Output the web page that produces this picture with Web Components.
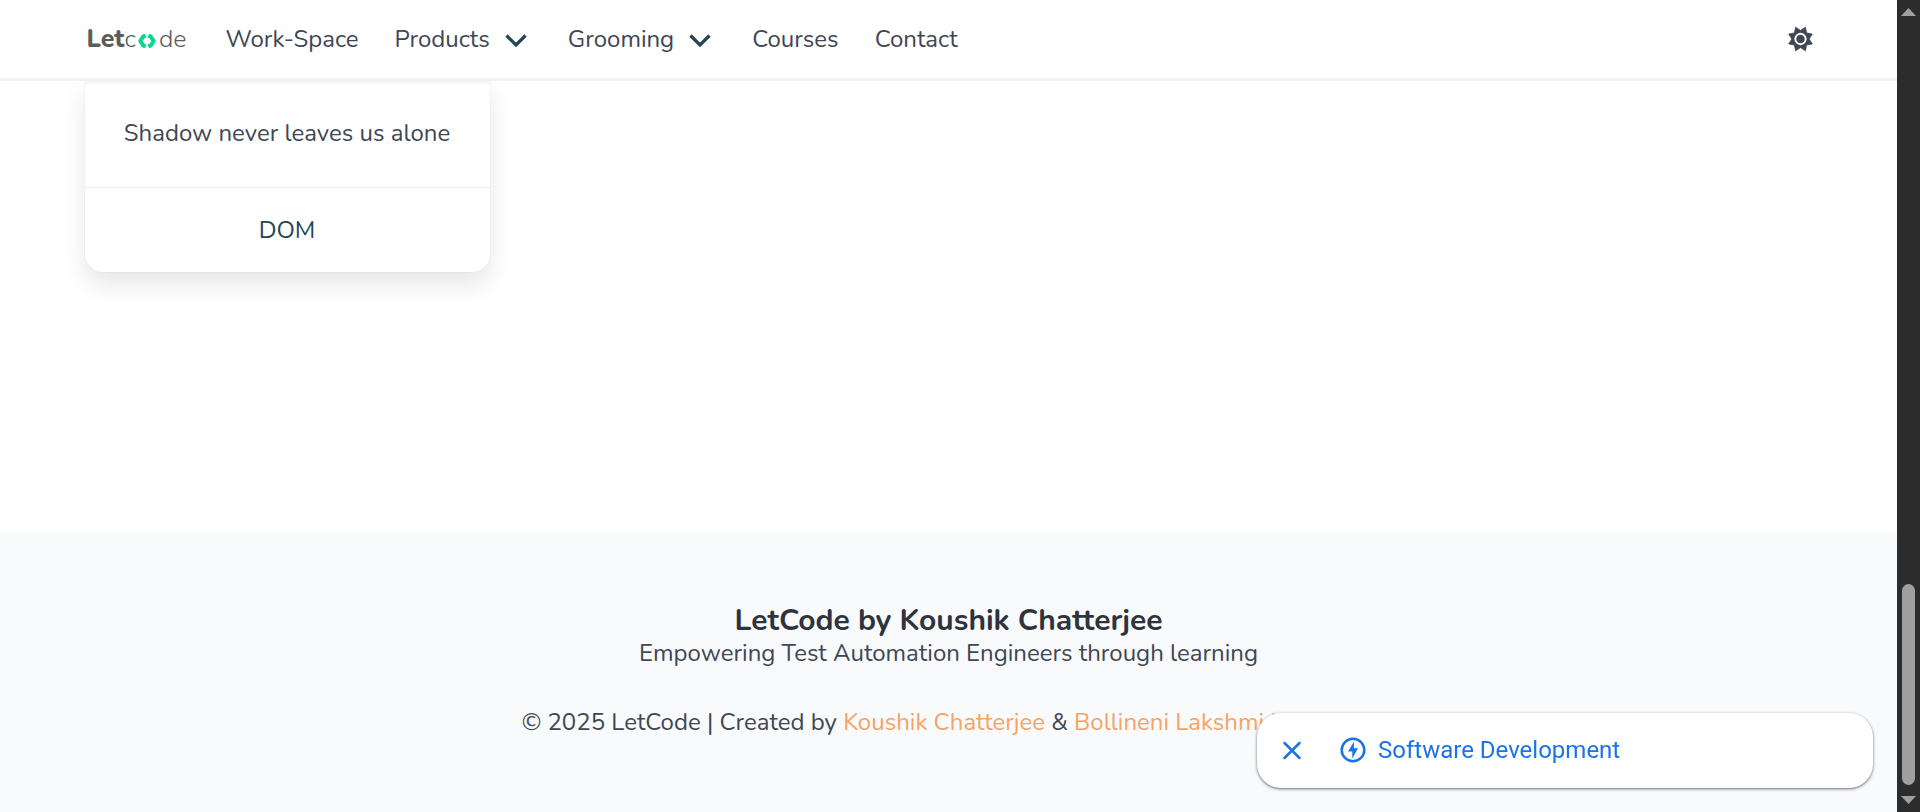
<!DOCTYPE html>
<html lang="en">
<head>
<meta charset="utf-8">
<title>LetCode</title>
<style>
  html, body { height: 100%; margin: 0; }
  body { background: #fff; color: #404654; font: 24px/36px Nunito, Lato, sans-serif; }
</style>
</head>
<body>
<lc-app></lc-app>

<script>
const define = (name, html) => customElements.define(name, class extends HTMLElement {
  constructor() {
    super();
    const template = document.createElement('template');
    template.innerHTML = html;
    this.attachShadow({ mode: 'open' }).append(template.content.cloneNode(true));
  }
});

define('lc-logo', `
  <style>
    :host { display: block; }
    a { display: flex; align-items: center; color: #5c5c5c; text-decoration: none; font-size: 25px; line-height: 36px; font-weight: 300; }
    b { font-weight: 800; }
    svg { display: block; margin: 3px 3px 0 2px; }
  </style>
  <a href="#home" aria-label="Letcode home"><b>Let</b><span>c</span><svg width="18" height="14" viewBox="0 0 18 14" fill="none" stroke="#06d98a" stroke-width="4" stroke-linejoin="round"><path d="M7.600 1.400 5.200 2.600 2.300 7l2.900 4.400 2.400 1.200M10.400 1.400l2.400 1.200L15.700 7l-2.900 4.400-2.400 1.200"/></svg><span>de</span></a>
`);

define('lc-nav-link', `
  <style>
    :host { display: block; }
    a { display: block; padding: 0 18px; color: inherit; text-decoration: none; }
  </style>
  <a href="#page"><slot></slot></a>
`);

define('lc-nav-menu', `
  <style>
    :host { display: block; }
    button { display: flex; align-items: center; gap: 15px; padding: 0 23px 0 18px; border: 0; background: none; color: inherit; font: inherit; }
    svg { display: block; margin-top: 4px; }
  </style>
  <button type="button" aria-haspopup="true"><slot></slot><svg width="22" height="14" viewBox="0 0 22 14" fill="none" stroke="#254655" stroke-width="3.200"><path d="M1.500 1.500 11 11l9.500-9.500"/></svg></button>
`);

define('lc-navbar', `
  <style>
    :host { display: block; background: #fff; border-bottom: 3px solid #f2f2f2; }
    .inner { display: flex; align-items: center; max-width: 1728px; height: 78px; margin: 0 auto; }
    lc-logo { padding-left: 2px; width: 121px; }
    nav { display: flex; flex: 1; }
    .theme { padding: 0; border: 0; background: none; }
    .theme svg { display: block; }
  </style>
  <div class="inner">
    <lc-logo></lc-logo>
    <nav aria-label="Main">
      <lc-nav-link>Work-Space</lc-nav-link>
      <lc-nav-menu>Products</lc-nav-menu>
      <lc-nav-menu>Grooming</lc-nav-menu>
      <lc-nav-link>Courses</lc-nav-link>
      <lc-nav-link>Contact</lc-nav-link>
    </nav>
    <button class="theme" type="button" aria-label="Switch theme">
      <svg width="25" height="26" viewBox="-12.500 -13 25 26"><path fill="#404654" stroke="#404654" stroke-width=".8" stroke-linejoin="round" d="M-4.900-11.800 0-8.600l4.900-3.200L6.100-6.100l5.700 1.200L8.600 0l3.200 4.900L6.100 6.100l-1.200 5.700L0 8.600l-4.900 3.200L-6.100 6.100l-5.700-1.200L-8.600 0l-3.200-4.900L-6.100-6.100Z"/><circle r="5.200" fill="#404654" stroke="#fff" stroke-width="1.900"/></svg>
    </button>
  </div>
`);

define('lc-card', `
  <style>
    :host { display: block; border-radius: 0 0 18px 18px; background: #fff; text-align: center;
      box-shadow: 0 12px 24px rgba(10,10,10,.1), 0 0 0 1px rgba(10,10,10,.02); }
    .body { padding: 34px 36px 36px; box-shadow: inset 0 4px 4px -2px rgba(10,10,10,.05); }
    footer { padding: 24px 18px; border-top: 1px solid #ededed; }
    a { color: #254655; text-decoration: none; }
  </style>
  <div class="body"><slot></slot></div>
  <footer><a href="#dom"><slot name="link"></slot></a></footer>
`);

define('lc-footer', `
  <style>
    :host { display: block; padding: 72px 36px 75px; background: #f9fafc; text-align: center; }
    h2 { margin: 0; color: #2e333d; font-size: 30px; line-height: 34px; font-weight: 700; }
    p { margin: 0 0 39px; line-height: 30px; }
    p:last-child { margin: 0; }
    a { color: #f7a364; text-decoration: none; }
  </style>
  <h2>LetCode by Koushik Chatterjee</h2>
  <p>Empowering Test Automation Engineers through learning</p>
  <p>© 2025 LetCode | Created by <a href="#koushik">Koushik Chatterjee</a> &amp; <a href="#bollineni">Bollineni Lakshmi Harshitha</a></p>
`);

define('lc-suggestion', `
  <style>
    :host { display: flex; align-items: center; box-sizing: border-box; width: 616px; height: 75px; padding: 0 23px 2px; border-radius: 24px; background: #fff;
      box-shadow: 0 1px 3px 1px rgba(0,0,0,.2), 0 1px 2px rgba(0,0,0,.35); color: #1a73e8; font-family: Roboto, sans-serif; }
    button { padding: 0; border: 0; background: none; }
    svg { display: block; }
    a { display: flex; align-items: center; gap: 12px; margin-left: 36px; color: inherit; text-decoration: none; }
  </style>
  <button type="button" aria-label="Close"><svg width="24" height="24" viewBox="0 0 24 24" fill="none" stroke="#1a73e8" stroke-width="2.500" stroke-linecap="round"><path d="m4.500 5 15 15m0-15-15 15"/></svg></button>
  <a href="#software"><svg width="26" height="26" viewBox="0 0 26 26"><circle cx="13" cy="13" r="11.300" fill="none" stroke="#1a73e8" stroke-width="2.500"/><path fill="#1a73e8" d="M13.900 4.800 8 14.500h4.300v6.900L18 11.300h-4.100Z"/></svg><slot></slot></a>
`);

define('lc-scrollbar', `
  <style>
    :host { display: flex; flex-direction: column; align-items: center; box-sizing: border-box; padding: 8px 0; background: #2c2c2c; }
    svg { display: block; fill: #9f9f9f; }
    .track { display: flex; flex: 1; align-items: flex-end; padding: 11px 0; }
    .thumb { width: 13px; height: 26.5%; border-radius: 7px; background: #9f9f9f; }
  </style>
  <svg width="15" height="8" viewBox="0 0 15 8"><path d="M7.500 0 15 8H0Z"/></svg>
  <div class="track"><div class="thumb"></div></div>
  <svg width="15" height="8" viewBox="0 0 15 8"><path d="M0 0h15L7.500 8Z"/></svg>
`);

define('lc-app', `
  <style>
    :host { display: grid; grid-template-columns: minmax(0, 1fr) 23px; height: 100%; }
    .page { display: flex; flex-direction: column; overflow: hidden; }
    lc-navbar { position: relative; z-index: 1; }
    main { flex: 1; }
    .grid { display: grid; grid-template-columns: repeat(4, minmax(0, 1fr)); gap: 36px; max-width: 1728px; margin: 0 auto; }
    lc-suggestion { position: fixed; right: 47px; bottom: 24px; z-index: 2; }
  </style>
  <div class="page">
    <lc-navbar></lc-navbar>
    <main>
      <div class="grid">
        <lc-card>Shadow never leaves us alone<span slot="link">DOM</span></lc-card>
      </div>
    </main>
    <lc-footer></lc-footer>
  </div>
  <lc-scrollbar></lc-scrollbar>
  <lc-suggestion>Software Development</lc-suggestion>
`);
</script>
</body>
</html>
